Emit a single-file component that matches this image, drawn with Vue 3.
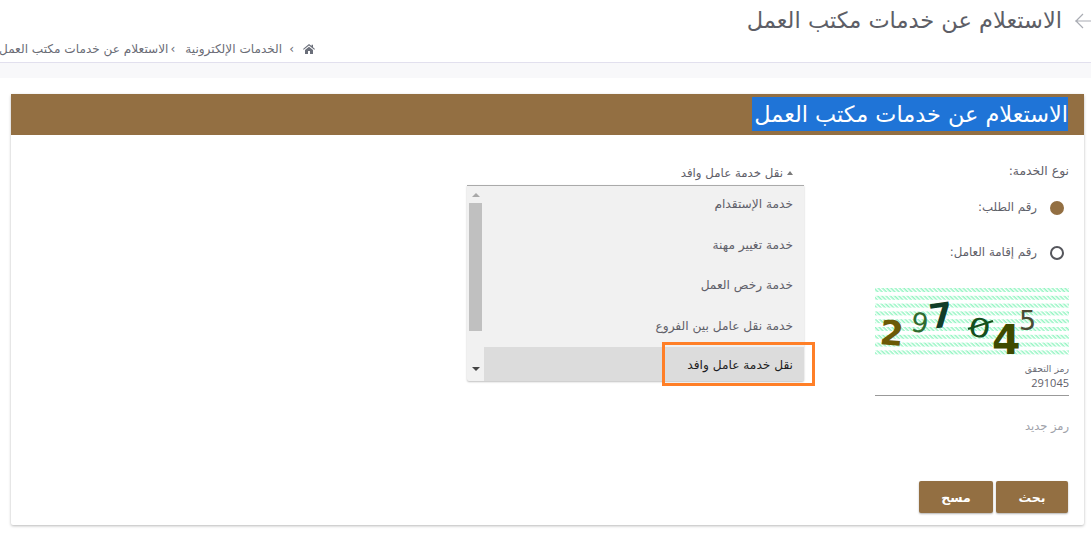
<script setup>
const services = ['خدمة الإستقدام', 'خدمة تغيير مهنة', 'خدمة رخص العمل', 'خدمة نقل عامل بين الفروع', 'نقل خدمة عامل وافد']
const digits = [
  { c: '2', x: 4, y: 56, s: 34, w: 700, f: '#6b5a06', t: 'rotate(5 4 56)' },
  { c: '9', x: 35, y: 43, s: 27, w: 400, f: '#2f6b2f', t: 'rotate(8 35 43)' },
  { c: '7', x: 56, y: 41, s: 34, w: 700, f: '#123d28', t: 'rotate(-8 56 41)' },
  { c: '0', x: 0, y: 0, s: 26, w: 400, f: '#14501c', t: 'translate(92 47) rotate(10) scale(1.35 1)' },
  { c: '4', x: 117, y: 66, s: 41, w: 700, f: '#3f4a00', t: '' },
  { c: '5', x: 144, y: 42, s: 27, w: 400, f: '#4a4a32', t: '' }
]
</script>

<template>
  <div class="page" dir="rtl">
    <header class="top">
      <div class="title-row">
        <svg class="back" width="17" height="16" viewBox="0 0 17 16"><path d="M1 8H17M9 1l-7 7 7 7" fill="none" stroke="#a9acb3" stroke-width="1.200"/></svg>
        <h1 class="title">الاستعلام عن خدمات مكتب العمل</h1>
      </div>
      <nav class="crumbs">
        <svg class="home" width="12" height="10" viewBox="0 0 12 10"><path d="M6 0 0 5l.7.8L6 1.500l5.300 4.300L12 5 10 3.300V.7H8.600v1.400zM2 6v4h3V7h2v3h3V6L6 2.700z" fill="#6b6f7a"/></svg>
        <span class="sep">›</span>
        <span class="crumb-mid">الخدمات الإلكترونية</span>
        <span class="sep tight">›</span>
        <span>الاستعلام عن خدمات مكتب العمل</span>
      </nav>
    </header>
    <div class="strip"></div>

    <section class="card">
      <div class="band"><span class="selected-title">الاستعلام عن خدمات مكتب العمل</span></div>
      <div class="body">
        <div class="main">
          <div class="form-col">
            <div class="label first">نوع الخدمة:</div>
            <label class="radio-row one"><span class="radio on"></span><span>رقم الطلب:</span></label>
            <label class="radio-row two"><span class="radio"></span><span>رقم إقامة العامل:</span></label>
            <svg class="captcha" width="194" height="68" viewBox="0 0 194 68">
              <defs>
                <pattern id="hatch" width="3" height="3" patternUnits="userSpaceOnUse" patternTransform="rotate(45)">
                  <rect width="3" height="3" fill="#fff"/>
                  <rect width="3" height="1.500" fill="#93f5c2"/>
                </pattern>
              </defs>
              <g v-for="n in 9" :key="n">
                <rect x="0" :y="(n - 1) * 7.800" width="194" height="4" fill="url(#hatch)"/>
              </g>
              <text v-for="d in digits" :key="d.c" :x="d.x" :y="d.y" :font-size="d.s" :font-weight="d.w" :fill="d.f" :transform="d.t" class="digit">{{ d.c }}</text>
              <line x1="93" y1="41" x2="118" y2="33" stroke="#14501c" stroke-width="2"/>
            </svg>
            <div class="code-field">
              <div class="code-label">رمز التحقق</div>
              <div class="code-value">291045</div>
            </div>
            <a class="renew">رمز جديد</a>
          </div>

          <div class="select-col">
            <div class="select-head"><span>نقل خدمة عامل وافد</span><i class="caret"></i></div>
            <div class="list">
              <ul class="options">
                <li v-for="(s, i) in services" :key="s" :class="{ active: i === 4 }">{{ s }}</li>
              </ul>
              <div class="scroll">
                <i class="arrow up"></i>
                <div class="track"><div class="thumb"></div></div>
                <i class="arrow down"></i>
              </div>
              <div class="highlight"></div>
            </div>
          </div>
        </div>
        <div class="actions">
          <button class="btn search">بحث</button>
          <button class="btn clear">مسح</button>
        </div>
      </div>
    </section>
  </div>
</template>

<style>
html, body { margin: 0; background: #fff; overflow: hidden; }
</style>

<style scoped>
.page {
  width: 1091px; height: 545px; overflow: hidden; background: #fff;
  font-family: "DejaVu Sans", sans-serif; color: #5f6069;
}
.top { height: 62px; border-bottom: 1px solid #e2e0ee; overflow: hidden; }
.title-row { display: flex; align-items: center; height: 40px; }
.back { margin: 2px 0 0 12px; flex: none; }
.title { margin: 0; font-size: 22.500px; line-height: 40px; font-weight: 400; color: #5d5e66; white-space: nowrap; }
.crumbs { display: flex; align-items: center; height: 18px; margin-right: 776px; width: 315px; font-size: 12.100px; white-space: nowrap; color: #6a6c76; }
.home { flex: none; margin-left: 9px; }
.sep { margin-left: 7px; }
.sep.tight { margin: 0 7px 0 2px; }
.crumb-mid { margin-left: 3px; }
.strip { height: 15px; background: #f8f8fa; }
.card {
  margin: 16px 7px 0 11px; height: 431px; background: #fff;
  border-radius: 2px; box-shadow: 0 1px 3px rgba(0,0,0,.28);
}
.band { height: 41px; background: #936f42; display: flex; justify-content: flex-start; padding: 3px 16px 0 0; box-sizing: border-box; }
.selected-title { background: #1f74d7; color: #fff; font-size: 22.400px; line-height: 34px; height: 34px; width: 316px; white-space: nowrap; overflow: hidden; display: block; }
.body { padding: 0 15px 0 0; position: relative; }
.main { display: flex; gap: 71px; align-items: flex-start; }
.form-col { width: 194px; flex: none; font-size: 11.800px; }
.label.first { padding-top: 28px; line-height: 16px; font-size: 12.400px; }
.radio-row { display: flex; align-items: center; gap: 13px; line-height: 16px; padding-right: 5px; }
.radio-row.one { margin-top: 19px; }
.radio-row.two { margin-top: 28px; }
.radio { width: 14px; height: 14px; border-radius: 50%; border: 2px solid #55565c; box-sizing: border-box; flex: none; margin-top: 3px; }
.radio.on { background: #936f42; border-color: #936f42; }
.captcha { display: block; margin-top: 28px; direction: ltr; overflow: visible; }
.digit { font-family: "DejaVu Sans", sans-serif; }
.code-field { border-bottom: 1px solid #999; height: 33px; padding-top: 6px; }
.code-label { font-size: 9.300px; line-height: 14px; color: #6a6c76; }
.code-value { font-size: 11px; line-height: 14px; color: #5f6069; font-family: "Open Sans", sans-serif; }
.renew { display: block; margin-top: 21px; color: #a0a2aa; font-size: 11.500px; line-height: 18px; }
.select-col { width: 337px; flex: none; }
.select-head { display: flex; align-items: center; gap: 4px; padding: 25px 11px 0 0; height: 25px; font-size: 11.800px; line-height: 16px; }
.caret { width: 0; height: 0; border: 3px solid transparent; border-bottom: 4px solid #7a7a7a; border-top: 0; order: -1; }
.list { position: relative; height: 195px; border-top: 1px solid #aaa; background: #f1f1f1; box-shadow: 0 1px 2px rgba(0,0,0,.25); display: flex; border-radius: 0 0 2px 2px; }
.options { list-style: none; margin: 0; padding: 0; flex: 1; font-size: 12.200px; }
.options li { height: 40.500px; line-height: 37px; padding-right: 11px; box-sizing: border-box; }
.options li.active { background: #dcdcdc; color: #1d1d22; height: 34px; margin-top: -1px; line-height: 37px; }
.scroll { width: 13px; margin: 0 2px 0 2px; flex: none; display: flex; flex-direction: column; align-items: center; }
.track { height: 128px; width: 13px; margin-top: 6px; }
.thumb { height: 128px; background: #c0c0c0; }
.arrow { width: 0; height: 0; border: 3px solid transparent; }
.arrow.up { border-width: 0 4px 4px; border-bottom-color: #a8a8a8; margin-top: 7px; }
.arrow.down { border-width: 4px 4px 0; border-top-color: #444; margin-top: 36px; }
.highlight { position: absolute; left: 195px; top: 156px; width: 153px; height: 44px; border: 3px solid #ff7f27; box-sizing: border-box; }
.actions { position: absolute; top: 346px; right: 16px; display: flex; gap: 3px; }
.btn { width: 74px; height: 32px; padding: 0; border: 0; border-radius: 2px; background: #936f42; color: #fff; font: 700 12.500px "DejaVu Sans", sans-serif; box-shadow: 0 1px 2px rgba(0,0,0,.3); }
.btn.search { width: 72px; }
</style>
